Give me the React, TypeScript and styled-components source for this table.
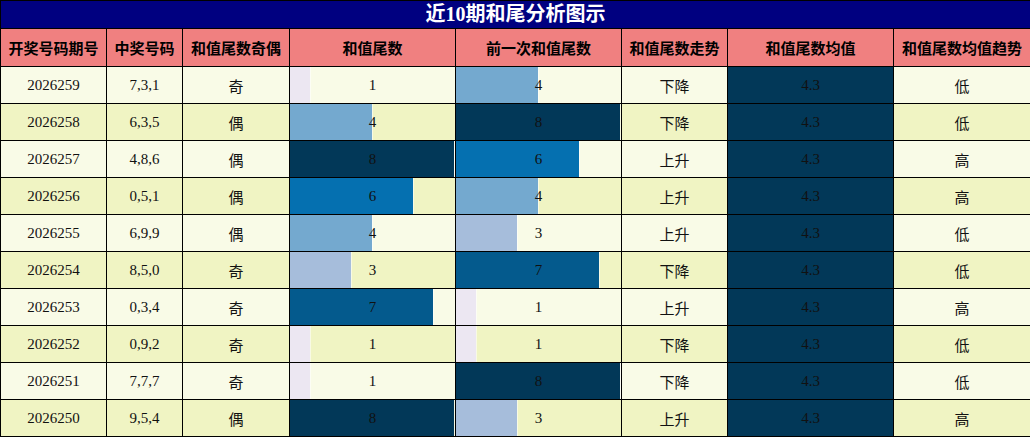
import React from "react";
import styled, { createGlobalStyle } from "styled-components";

const Global = createGlobalStyle`
  html, body { margin: 0; padding: 0; background: #fff; }
  body { font-family: "Liberation Serif", "Noto Sans CJK SC", serif; }
`;

const Table = styled.table`
  width: 1030px;
  border-collapse: collapse;
  table-layout: fixed;
  border: 1px solid #000;
  font-family: "Liberation Serif", "Noto Sans CJK SC", serif;
`;

const TitleCell = styled.th`
  height: 27px;
  padding: 0;
  background: #000080;
  color: #fff;
  font-size: 20px;
  font-weight: bold;
  text-align: center;
  border: 1px solid #000;
  line-height: 27px;
`;

const HeadCell = styled.th`
  height: 37px;
  padding: 0;
  background: #f08080;
  color: #000;
  font-family: "Noto Sans CJK SC", sans-serif;
  font-size: 15px;
  font-weight: bold;
  text-align: center;
  border: 1px solid #000;
`;

const Cell = styled.td<{ $alt: boolean; $cjk?: boolean }>`
  height: 36px;
  padding: 0;
  background: ${(p) => (p.$alt ? "#f0f4c3" : "#f9fbe7")};
  color: #111;
  font-family: ${(p) =>
    p.$cjk ? '"Noto Sans CJK SC", sans-serif' : '"Liberation Serif", "Noto Sans CJK SC", serif'};
  font-size: 15px;
  text-align: center;
  border: 1px solid #000;
`;

const BarCell = styled(Cell)`
  background-repeat: no-repeat;
`;

const AvgCell = styled.td`
  padding: 0;
  background: #023858;
  color: #111;
  font-family: "Liberation Serif", serif;
  font-size: 15px;
  text-align: center;
  border: 1px solid #000;
`;

const PUBU = [
  "#fff7fb",
  "#ece7f2",
  "#d0d1e6",
  "#a6bddb",
  "#74a9cf",
  "#3690c0",
  "#0570b0",
  "#045a8d",
  "#023858",
];

type Row = {
  issue: string;
  nums: string;
  parity: string;
  tail: number;
  prev: number;
  trend: string;
  avgTrend: string;
};

const rows: Row[] = [
  { issue: "2026259", nums: "7,3,1", parity: "奇", tail: 1, prev: 4, trend: "下降", avgTrend: "低" },
  { issue: "2026258", nums: "6,3,5", parity: "偶", tail: 4, prev: 8, trend: "下降", avgTrend: "低" },
  { issue: "2026257", nums: "4,8,6", parity: "偶", tail: 8, prev: 6, trend: "上升", avgTrend: "高" },
  { issue: "2026256", nums: "0,5,1", parity: "偶", tail: 6, prev: 4, trend: "上升", avgTrend: "高" },
  { issue: "2026255", nums: "6,9,9", parity: "偶", tail: 4, prev: 3, trend: "上升", avgTrend: "低" },
  { issue: "2026254", nums: "8,5,0", parity: "奇", tail: 3, prev: 7, trend: "下降", avgTrend: "低" },
  { issue: "2026253", nums: "0,3,4", parity: "奇", tail: 7, prev: 1, trend: "上升", avgTrend: "高" },
  { issue: "2026252", nums: "0,9,2", parity: "奇", tail: 1, prev: 1, trend: "下降", avgTrend: "低" },
  { issue: "2026251", nums: "7,7,7", parity: "奇", tail: 1, prev: 8, trend: "下降", avgTrend: "低" },
  { issue: "2026250", nums: "9,5,4", parity: "偶", tail: 8, prev: 3, trend: "上升", avgTrend: "高" },
];

const MAX = 8;
const widths = [106, 76, 107, 166, 166, 106, 166, 137];

function barStyle(v: number, alt: boolean): React.CSSProperties {
  const bg = alt ? "#f0f4c3" : "#f9fbe7";
  const pct = (v / MAX) * 100;
  const c = PUBU[v];
  return {
    backgroundImage: `linear-gradient(to right, ${c} 0, ${c} calc(${pct}% - 1px), rgba(255,255,255,0.55) calc(${pct}% - 1px), rgba(255,255,255,0.55) ${pct}%, ${bg} ${pct}%, ${bg} 100%)`,
  };
}

export default function App() {
  return (
    <>
      <Global />
      <Table>
        <colgroup>
          {widths.map((w, i) => (
            <col key={i} style={{ width: w }} />
          ))}
        </colgroup>
        <thead>
          <tr>
            <TitleCell colSpan={8}>近10期和尾分析图示</TitleCell>
          </tr>
          <tr>
            <HeadCell>开奖号码期号</HeadCell>
            <HeadCell>中奖号码</HeadCell>
            <HeadCell>和值尾数奇偶</HeadCell>
            <HeadCell>和值尾数</HeadCell>
            <HeadCell>前一次和值尾数</HeadCell>
            <HeadCell>和值尾数走势</HeadCell>
            <HeadCell>和值尾数均值</HeadCell>
            <HeadCell>和值尾数均值趋势</HeadCell>
          </tr>
        </thead>
        <tbody>
          {rows.map((r, i) => {
            const alt = i % 2 === 1;
            return (
              <tr key={r.issue}>
                <Cell $alt={alt}>{r.issue}</Cell>
                <Cell $alt={alt}>{r.nums}</Cell>
                <Cell $alt={alt} $cjk>{r.parity}</Cell>
                <BarCell $alt={alt} style={barStyle(r.tail, alt)}>{r.tail}</BarCell>
                <BarCell $alt={alt} style={barStyle(r.prev, alt)}>{r.prev}</BarCell>
                <Cell $alt={alt} $cjk>{r.trend}</Cell>
                <AvgCell>4.3</AvgCell>
                <Cell $alt={alt} $cjk>{r.avgTrend}</Cell>
              </tr>
            );
          })}
        </tbody>
      </Table>
    </>
  );
}
